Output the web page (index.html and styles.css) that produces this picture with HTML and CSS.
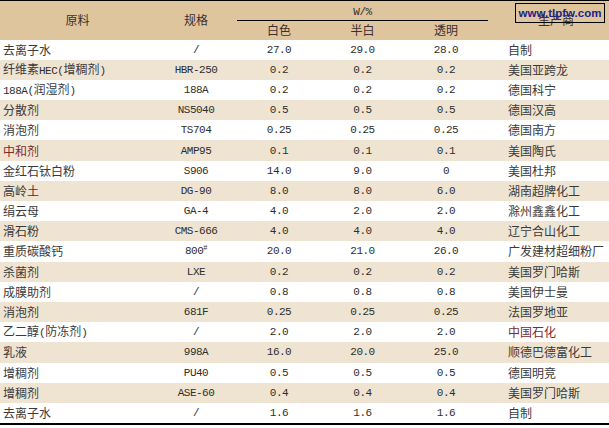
FILE: index.html
```html
<!DOCTYPE html>
<html lang="zh">
<head>
<meta charset="utf-8">
<title>配方表</title>
<link rel="stylesheet" href="styles.css">
</head>
<body>
<div class="wrap">
<table class="tbl">
  <colgroup>
    <col class="c1"><col class="c2"><col class="c3"><col class="c4"><col class="c5"><col class="c6">
  </colgroup>
  <thead>
    <tr class="h1">
      <th rowspan="2" class="hname">原料</th>
      <th rowspan="2" class="hspec">规格</th>
      <th colspan="3" class="hw"><span class="m">W/%</span></th>
      <th rowspan="2" class="hmaker">生产商</th>
    </tr>
    <tr class="h2">
      <th>白色</th>
      <th>半白</th>
      <th>透明</th>
    </tr>
  </thead>
  <tbody>
    <tr><td class="name">去离子水</td><td class="m">/</td><td class="m">27.0</td><td class="m">29.0</td><td class="m">28.0</td><td class="maker">自制</td></tr>
    <tr class="alt"><td class="name">纤维素<span class="m">HEC(</span>增稠剂<span class="m">)</span></td><td class="m">HBR-250</td><td class="m">0.2</td><td class="m">0.2</td><td class="m">0.2</td><td class="maker">美国亚跨龙</td></tr>
    <tr><td class="name"><span class="m">188A(</span>润湿剂<span class="m">)</span></td><td class="m">188A</td><td class="m">0.2</td><td class="m">0.2</td><td class="m">0.2</td><td class="maker">德国科宁</td></tr>
    <tr class="alt"><td class="name">分散剂</td><td class="m">NS5040</td><td class="m">0.5</td><td class="m">0.5</td><td class="m">0.5</td><td class="maker">德国汉高</td></tr>
    <tr><td class="name">消泡剂</td><td class="m">TS704</td><td class="m">0.25</td><td class="m">0.25</td><td class="m">0.25</td><td class="maker">德国南方</td></tr>
    <tr class="alt"><td class="name red">中和剂</td><td class="m">AMP95</td><td class="m">0.1</td><td class="m">0.1</td><td class="m">0.1</td><td class="maker">美国陶氏</td></tr>
    <tr><td class="name">金红石钛白粉</td><td class="m">S906</td><td class="m">14.0</td><td class="m">9.0</td><td class="m">0</td><td class="maker">美国杜邦</td></tr>
    <tr class="alt"><td class="name">高岭土</td><td class="m">DG-90</td><td class="m">8.0</td><td class="m">8.0</td><td class="m">6.0</td><td class="maker">湖南超牌化工</td></tr>
    <tr><td class="name">绢云母</td><td class="m">GA-4</td><td class="m">4.0</td><td class="m">2.0</td><td class="m">2.0</td><td class="maker">滁州鑫鑫化工</td></tr>
    <tr class="alt"><td class="name">滑石粉</td><td class="m">CMS-666</td><td class="m">4.0</td><td class="m">4.0</td><td class="m">4.0</td><td class="maker">辽宁合山化工</td></tr>
    <tr><td class="name">重质碳酸钙</td><td class="m">800<sup class="sup">#</sup></td><td class="m">20.0</td><td class="m">21.0</td><td class="m">26.0</td><td class="maker">广发建材超细粉厂</td></tr>
    <tr class="alt"><td class="name">杀菌剂</td><td class="m">LXE</td><td class="m">0.2</td><td class="m">0.2</td><td class="m">0.2</td><td class="maker">美国罗门哈斯</td></tr>
    <tr><td class="name">成膜助剂</td><td class="m">/</td><td class="m">0.8</td><td class="m">0.8</td><td class="m">0.8</td><td class="maker">美国伊士曼</td></tr>
    <tr class="alt"><td class="name">消泡剂</td><td class="m">681F</td><td class="m">0.25</td><td class="m">0.25</td><td class="m">0.25</td><td class="maker">法国罗地亚</td></tr>
    <tr><td class="name">乙二醇<span class="m">(</span>防冻剂<span class="m">)</span></td><td class="m">/</td><td class="m">2.0</td><td class="m">2.0</td><td class="m">2.0</td><td class="maker red">中国石化</td></tr>
    <tr class="alt"><td class="name">乳液</td><td class="m">998A</td><td class="m">16.0</td><td class="m">20.0</td><td class="m">25.0</td><td class="maker">顺德巴德富化工</td></tr>
    <tr><td class="name">增稠剂</td><td class="m">PU40</td><td class="m">0.5</td><td class="m">0.5</td><td class="m">0.5</td><td class="maker">德国明竞</td></tr>
    <tr class="alt"><td class="name">增稠剂</td><td class="m">ASE-60</td><td class="m">0.4</td><td class="m">0.4</td><td class="m">0.4</td><td class="maker">美国罗门哈斯</td></tr>
    <tr><td class="name">去离子水</td><td class="m">/</td><td class="m">1.6</td><td class="m">1.6</td><td class="m">1.6</td><td class="maker">自制</td></tr>
  </tbody>
</table>
<div class="mark">www.tlpfw.com</div>
</div>
</body>
</html>
```

FILE: styles.css
```css
html, body {
  margin: 0;
  padding: 0;
  background: #ffffff;
}

.wrap {
  position: relative;
  width: 609px;
}

.tbl {
  width: 609px;
  border-collapse: collapse;
  table-layout: fixed;
  border-top: 1px solid #000;
  border-bottom: 2px solid #000;
  font-family: "Noto Sans CJK SC", sans-serif;
  font-size: 12px;
  color: #3a3a3a;
}

.c1 { width: 155px; }
.c2 { width: 82px; }
.c3 { width: 84px; }
.c4 { width: 83px; }
.c5 { width: 84px; }
.c6 { width: 121px; }

.tbl th {
  background: #dfc59d;
  font-weight: normal;
  color: #3d3030;
  padding: 0;
  text-align: center;
  line-height: 14px;
}

.h1 { height: 20px; }
.h2 { height: 19px; }

.hw {
  border-bottom: 1px solid #000;
}

.hmaker {
  text-align: left !important;
  padding-left: 50px !important;
}

.tbl td {
  padding: 0;
  height: 20.2px;
  line-height: 14px;
  text-align: center;
  white-space: nowrap;
}

.tbl td.name {
  text-align: left;
  padding-left: 3px;
}

.tbl td.maker {
  text-align: left;
  padding-left: 20px;
}

.alt td {
  background: #efe4d2;
}

.m {
  font-family: "Liberation Mono", monospace;
  font-size: 11px;
  letter-spacing: -0.5px;
  color: #2e2e2e;
}

.sup {
  font-size: 7px;
  vertical-align: 4px;
  line-height: 0;
}

.red {
  color: #7a2c2c;
}

.mark {
  position: absolute;
  left: 515px;
  top: 3px;
  width: 88px;
  height: 18px;
  border: 1.5px solid #000;
  font-family: "Liberation Sans", Arial, sans-serif;
  font-weight: bold;
  font-size: 11.5px;
  line-height: 18px;
  color: #22228c;
  text-align: center;
}
```
